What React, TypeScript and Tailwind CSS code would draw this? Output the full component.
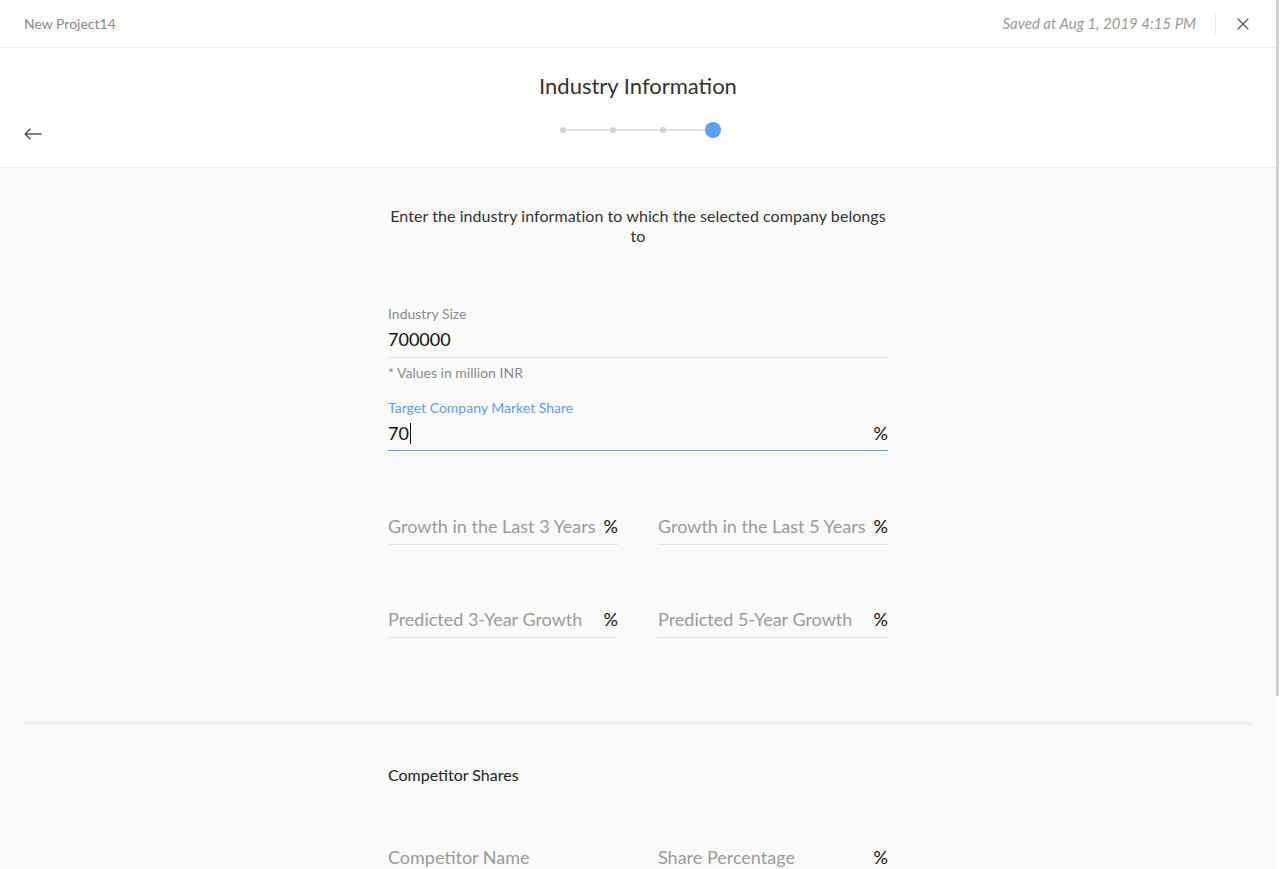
import { X } from "lucide-react"

const font = { fontFamily: "Lato, 'Open Sans', sans-serif" }

const PercentField = ({ placeholder }: Props) => (
    <div className="flex items-end justify-between border-b border-[#e3e3e3] pb-[6px] h-[33px]">
        <span className="text-[18px] leading-[24px] text-[#9a9a9a] whitespace-nowrap">{placeholder}</span>
        <span className="text-[18px] leading-[24px] text-[#111]">%</span>
    </div>
)

export default function App() {
    return (
        <div className="flex w-[1280px] h-[869px] overflow-hidden bg-white" style={font}>
            <div className="flex-1 flex flex-col min-w-0">
                <div className="h-[48px] flex items-center justify-between border-b border-[#eeeeee] pl-6 pr-[23px] shrink-0">
                    <span className="text-[14px] text-[#8a8a8a]">New Project14</span>
                    <div className="flex items-center">
                        <span className="text-[15px] italic text-[#9a9a9a]">Saved at Aug 1, 2019 4:15 PM</span>
                        <div className="w-px h-[20px] bg-[#e8e8e8] ml-[19px] mr-[17px]" />
                        <X size={20} strokeWidth={1.4} className="text-[#555]" />
                    </div>
                </div>

                <div className="relative h-[120px] border-b border-[#eeeeee] flex flex-col items-center shrink-0">
                    <h1 className="mt-[24px] text-[22px] leading-[28px] text-[#333]">Industry Information</h1>
                    <div className="mt-[22px] ml-[5px] flex items-center">
                        <span className="w-[6px] h-[6px] rounded-full bg-[#d0d0d0]" />
                        <span className="w-[44px] h-[2px] bg-[#e3e3e3]" />
                        <span className="w-[6px] h-[6px] rounded-full bg-[#d0d0d0]" />
                        <span className="w-[44px] h-[2px] bg-[#e3e3e3]" />
                        <span className="w-[6px] h-[6px] rounded-full bg-[#d0d0d0]" />
                        <span className="w-[39px] h-[2px] bg-[#e3e3e3]" />
                        <span className="w-[16px] h-[16px] rounded-full bg-[#5e9df5]" />
                    </div>
                    <svg width="18" height="12" viewBox="0 0 18 12" fill="none" className="absolute left-[24px] top-[80px]">
                        <path d="M1 6H17.5M1 6L6.5 0.8M1 6L6.5 11.2" stroke="#555" strokeWidth="1.5" />
                    </svg>
                </div>

                <div className="flex-1 bg-[#fafafa] flex flex-col">
                    <div className="w-[500px] mx-auto">
                        <p className="mt-[38px] text-center text-[16px] leading-[20px] tracking-[0.06px] text-[#333]">
                            Enter the industry information to which the selected company belongs<br />to
                        </p>

                        <div className="mt-[59px]">
                            <label className="block text-[14px] leading-[18px] text-[#8a8a8a]">Industry Size</label>
                            <div className="border-b border-[#e3e3e3] pt-[4px] pb-[6px] text-[18px] leading-[24px] text-[#111]">700000</div>
                            <p className="mt-[6px] text-[14px] leading-[18px] text-[#8a8a8a]">* Values in million INR</p>
                        </div>

                        <div className="mt-[17px]">
                            <label className="block text-[14px] leading-[18px] text-[#5e9df5]">Target Company Market Share</label>
                            <div className="flex items-center justify-between border-b border-[#5e9df5] pt-[4px] pb-[5px] text-[18px] leading-[24px] text-[#111]">
                                <span className="flex items-center">70<span className="w-px h-[21px] bg-[#111] ml-px" /></span>
                                <span>%</span>
                            </div>
                        </div>

                        <div className="mt-[61px] grid grid-cols-2 gap-x-10 gap-y-[60px]">
                            <PercentField placeholder="Growth in the Last 3 Years" />
                            <PercentField placeholder="Growth in the Last 5 Years" />
                            <PercentField placeholder="Predicted 3-Year Growth" />
                            <PercentField placeholder="Predicted 5-Year Growth" />
                        </div>
                    </div>

                    <div className="mx-6 mt-[83px] h-[4px] bg-[#f1f1f1]" />

                    <div className="w-[500px] mx-auto">
                        <h2 className="mt-[40px] text-[16px] leading-[20px] text-[#222]">Competitor Shares</h2>
                        <div className="mt-[60px] grid grid-cols-2 gap-x-10">
                            <span className="text-[18px] leading-[24px] text-[#9a9a9a]">Competitor Name</span>
                            <div className="flex justify-between">
                                <span className="text-[18px] leading-[24px] text-[#9a9a9a]">Share Percentage</span>
                                <span className="text-[18px] leading-[24px] text-[#111]">%</span>
                            </div>
                        </div>
                    </div>
                </div>
            </div>

            <div className="w-[4px] bg-white flex flex-col">
                <div className="h-[696px] w-[3px] bg-[#d2d2d2]" />
            </div>
        </div>
    )
}

type Props = {
    placeholder: string
}
